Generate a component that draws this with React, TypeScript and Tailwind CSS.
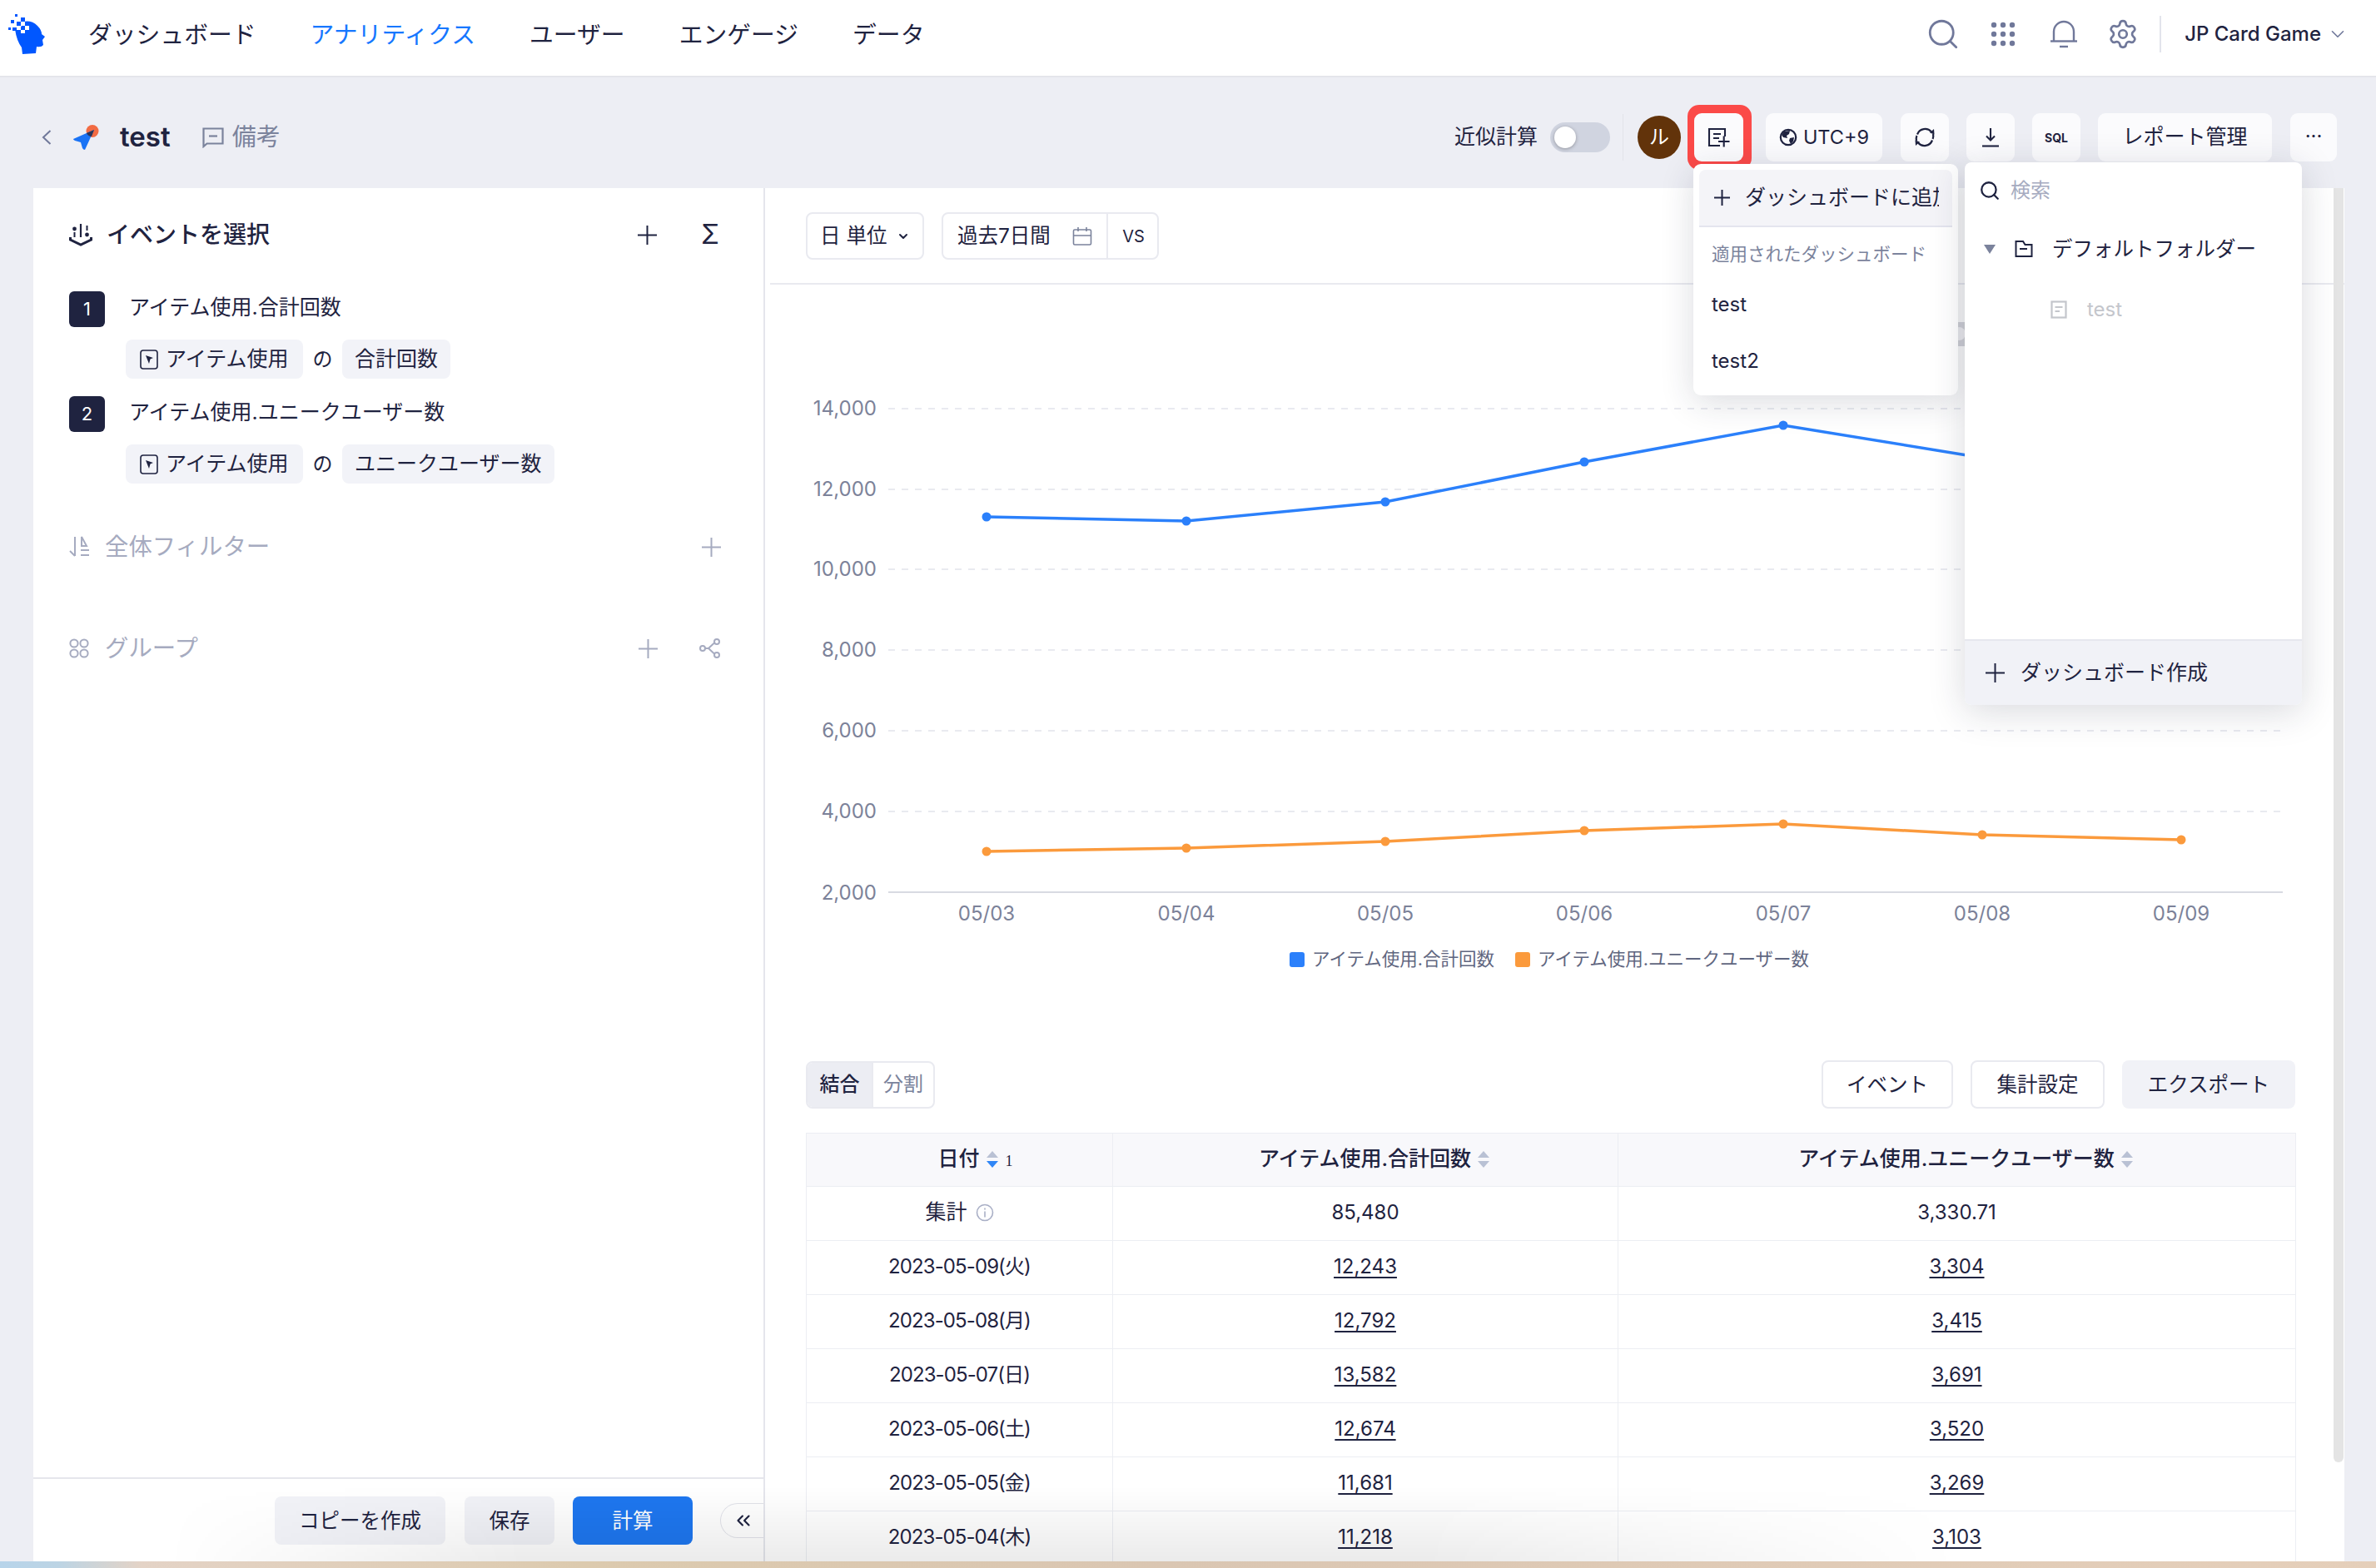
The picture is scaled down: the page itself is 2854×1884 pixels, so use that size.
import React from "react";
import { Search, ChevronDown, ChevronsLeft, Settings } from "lucide-react";

const ink = "#1f2340";

function Cross({ size, color, width = 2 }: { size: number; color?: string; width?: number }) {
  const c = size / 2;
  return (
    <svg width={size} height={size} viewBox={"0 0 " + size + " " + size} fill="none" stroke={color || ink} strokeWidth={width} className="shrink-0">
      <path d={"M0 " + c + " H" + size + " M" + c + " 0 V" + size} />
    </svg>
  );
}

function Logo() {
  return (
    <svg width="60" height="70" viewBox="0 0 60 70" className="shrink-0 -mt-[23px]">
      <path fill="#0057ff" d="M28 27 Q38 25 45 32 Q50 37 50 42 L54 45 L51 49 L52 55 Q50 58 44 57 L43 65 L27 66 L26 58 Q20 50 18 36 L24 36 Z" />
      <rect x="18" y="18" width="3" height="3" fill="#0057ff" />
      <rect x="13" y="25" width="4" height="4" fill="#0057ff" />
      <rect x="25" y="22" width="5" height="5" fill="#0057ff" />
      <rect x="20" y="27" width="5" height="5" fill="#0057ff" />
      <rect x="10" y="34" width="3" height="3" fill="#0057ff" />
      <rect x="15" y="34" width="5" height="4" fill="#0057ff" />
      <rect x="25" y="27" width="5" height="5" fill="#fff" />
      <rect x="30" y="32" width="5" height="5" fill="#fff" />
      <rect x="25" y="37" width="5" height="4" fill="#fff" />
      <rect x="20" y="32" width="5" height="5" fill="#fff" />
    </svg>
  );
}

function Rocket() {
  return (
    <svg width="32" height="32" viewBox="0 0 32 32" className="shrink-0">
      <circle cx="24" cy="8.5" r="7.5" fill="#f26b43" />
      <path d="M1 18 L26 7 L15 31 Q13 31 12 29 L10 22 L3 20 Q1 19 1 18 Z" fill="#1a73f5" />
      <path d="M17 11 L26 7 L23 15 Q19 15 17 11 Z" fill="#2c3558" />
    </svg>
  );
}

function NoteIcon() {
  return (
    <svg width="26" height="25" viewBox="0 0 26 25" fill="none" stroke="#7b839c" strokeWidth="2.2" className="shrink-0">
      <path d="M1.5 23 V1.5 H24.5 V19.5 H5.5 Z" />
      <path d="M8 10.5 H18" />
    </svg>
  );
}

function EventIcon() {
  return (
    <svg width="28" height="28" viewBox="0 0 28 28" fill="none" className="shrink-0">
      <path d="M1.5 17 V20 L14 26 L26.5 20 V17" stroke={ink} strokeWidth="3" />
      <path d="M14 1 V17" stroke={ink} strokeWidth="2.2" />
      <circle cx="6.5" cy="7" r="2.4" fill={ink} />
      <circle cx="21.5" cy="14" r="2.4" fill={ink} />
      <path d="M6.5 11 V17" stroke={ink} strokeWidth="2" />
      <path d="M21.5 3 V9" stroke={ink} strokeWidth="2" />
    </svg>
  );
}

function ChipIcon() {
  return (
    <svg width="22" height="24" viewBox="0 0 22 24" fill="none" className="shrink-0">
      <rect x="1" y="1" width="20" height="22" rx="3" stroke={ink} strokeWidth="1.6" />
      <path d="M7 7 L16 10 L12.5 11.5 L11 17 Z" fill={ink} />
    </svg>
  );
}

function Chip({ wide, children }: { wide?: boolean; children: React.ReactNode }) {
  return (
    <div className={"h-[47px] rounded-[8px] bg-[#f2f3f8] flex items-center text-[25px] text-[#1f2340] " + (wide ? "pl-[17px] w-[213px] gap-[9px]" : "px-[15px]")}>
      {children}
    </div>
  );
}

function Step({ n, title, metric }: { n: string; title: string; metric: string }) {
  return (
    <>
      <div className="flex items-center h-[43px]">
        <div className="w-[43px] h-[43px] rounded-[6px] bg-[#1f2340] text-white text-[22px] flex items-center justify-center">{n}</div>
        <div className="ml-[29px] text-[25px] text-[#1f2340] -mt-[3px]">{title}</div>
      </div>
      <div className="flex items-center h-[47px] mt-[15px] pl-[68px]">
        <Chip wide>
          <ChipIcon />
          アイテム使用
        </Chip>
        <div className="w-[47px] text-center text-[24px] text-[#1f2340]">の</div>
        <Chip>{metric}</Chip>
      </div>
    </>
  );
}

function FilterIcon() {
  return (
    <svg width="25" height="26" viewBox="0 0 25 26" fill="none" stroke="#a6abc0" strokeWidth="2" className="shrink-0">
      <path d="M7 1 V24 M1 18 L7 24" />
      <path d="M15 1 V12 L21 12 Z M14 17 H24 M14 23 H24" />
    </svg>
  );
}

function GroupIcon() {
  return (
    <svg width="24" height="24" viewBox="0 0 24 24" fill="none" stroke="#a6abc0" strokeWidth="2" className="shrink-0">
      <circle cx="6" cy="6" r="4.6" />
      <circle cx="18" cy="6" r="4.6" />
      <circle cx="6" cy="18" r="4.6" />
      <circle cx="18" cy="18" r="4.6" />
    </svg>
  );
}

function ShareIcon() {
  return (
    <svg width="26" height="24" viewBox="0 0 26 24" fill="none" stroke="#a6abc0" strokeWidth="2" className="shrink-0">
      <circle cx="4" cy="12" r="3" />
      <circle cx="21" cy="4" r="3" />
      <circle cx="21" cy="20" r="3" />
      <path d="M7 12 H11 L18 5.5 M11 12 L18 18.5" />
    </svg>
  );
}

function ToolButton({ className, children }: { className: string; children: React.ReactNode }) {
  return <div className={"h-[58px] rounded-[9px] bg-[#fbfbfd] flex items-center justify-center text-[#1f2340] " + className}>{children}</div>;
}

function AddDocIcon() {
  return (
    <svg width="28" height="24" viewBox="0 0 28 24" fill="none" stroke={ink} strokeWidth="2.1">
      <path d="M15 22 H2 V2 H21 V11" />
      <path d="M7 8 H16 M7 13 H14" />
      <path d="M13 17 H26.5 M19.7 10.5 V23.5" />
    </svg>
  );
}

function GlobeIcon() {
  return (
    <svg width="22" height="22" viewBox="0 0 22 22" fill="none">
      <circle cx="11" cy="11" r="9.2" stroke={ink} strokeWidth="2.2" />
      <path d="M6 4 L13 3 L12 7 L9 9 L10 12 L5 11 L3 8 Z M13 12 L18 11 L17 16 L14 19 L12 15 Z" fill={ink} />
    </svg>
  );
}

function RefreshIcon() {
  return (
    <svg width="26" height="26" viewBox="0 0 26 26" fill="none" stroke={ink} strokeWidth="2.2">
      <path d="M4 9.5 A10 10 0 0 1 21 6.5" />
      <path d="M22 16.5 A10 10 0 0 1 5 19.5" />
      <path d="M3 17 A10 10 0 0 1 3.4 11" />
      <path d="M23 9 A10 10 0 0 1 22.6 15" />
      <path d="M19 7.5 L24 3 L24.5 9.5 Z M7 18.5 L2 23 L1.5 16.5 Z" fill={ink} stroke="none" />
    </svg>
  );
}

function DownloadIcon() {
  return (
    <svg width="22" height="24" viewBox="0 0 22 24" fill="none" stroke={ink} strokeWidth="2.1">
      <path d="M11 1 V15 M6 10.5 L11 15.5 L16 10.5" />
      <path d="M1 22.5 H21" />
    </svg>
  );
}

function CalendarIcon() {
  return (
    <svg width="24" height="22" viewBox="0 0 24 22" fill="none" stroke="#7b839c" strokeWidth="1.6">
      <rect x="1.5" y="3" width="21" height="18" rx="1.5" />
      <path d="M1.5 10 H22.5 M7 0 V5 M17 0 V5" />
    </svg>
  );
}

function Sort({ active }: { active?: boolean }) {
  return (
    <svg width="16" height="22" viewBox="0 0 16 22" className="shrink-0 ml-[7px]">
      <path d="M8 1 L15 9 H1 Z" fill="#b9c1d4" />
      <path d="M8 21 L15 13 H1 Z" fill={active ? "#2f86f6" : "#b9c1d4"} />
    </svg>
  );
}

function InfoIcon() {
  return (
    <svg width="22" height="22" viewBox="0 0 22 22" fill="none" stroke="#a9afc6" strokeWidth="1.6" className="shrink-0">
      <circle cx="11" cy="11" r="9.5" />
      <path d="M11 9.5 V16.5" />
      <path d="M11 5.5 V7.5" />
    </svg>
  );
}

const labels = ["05/03", "05/04", "05/05", "05/06", "05/07", "05/08", "05/09"];
const xs = [1185, 1425, 1664, 1903, 2142, 2381, 2620];
const blue = [621, 626, 603, 555, 511, 550, 576];
const orange = [1023, 1019, 1011, 998, 990, 1003, 1009];
const grid: [string, number][] = [
  ["14,000", 491],
  ["12,000", 588],
  ["10,000", 684],
  ["8,000", 781],
  ["6,000", 878],
  ["4,000", 975],
];

function Chart() {
  const path = (v: number[]) => v.map((y, i) => xs[i] + "," + y).join(" ");
  return (
    <svg width="1884" height="932" viewBox="919 342 1884 932" className="block" fontFamily="Inter, 'Noto Sans CJK JP', sans-serif">
      {grid.map(([t, y]) => (
        <g key={t}>
          <line x1="1067" x2="2742" y1={y} y2={y} stroke="#e9eaf0" strokeWidth="2" strokeDasharray="8 8" />
          <text x="1053" y={y + 8} textAnchor="end" fontSize="24" fill="#7c8299">{t}</text>
        </g>
      ))}
      <line x1="1067" x2="2742" y1="1072" y2="1072" stroke="#d8dae2" strokeWidth="2" />
      <text x="1053" y="1081" textAnchor="end" fontSize="24" fill="#7c8299">2,000</text>
      {labels.map((l, i) => (
        <text key={l} x={xs[i]} y="1106" textAnchor="middle" fontSize="24" fill="#7c8299">{l}</text>
      ))}
      <rect x="2340" y="387" width="30" height="29" fill="#d6d7dc" />
      <circle cx="2353" cy="401" r="8" fill="#f4f4f6" />
      <polyline points={path(blue)} fill="none" stroke="#2b80fb" strokeWidth="3.5" />
      {blue.map((y, i) => <circle key={i} cx={xs[i]} cy={y} r="5.5" fill="#2b80fb" />)}
      <polyline points={path(orange)} fill="none" stroke="#fb9a3c" strokeWidth="3.5" />
      {orange.map((y, i) => <circle key={i} cx={xs[i]} cy={y} r="5.5" fill="#fb9a3c" />)}
      <rect x="1549" y="1144" width="18" height="18" rx="3" fill="#2b80fb" />
      <text x="1576" y="1160" fontSize="21.5" fill="#5f6680">アイテム使用.合計回数</text>
      <rect x="1820" y="1144" width="18" height="18" rx="3" fill="#fb9a3c" />
      <text x="1847" y="1160" fontSize="21.5" fill="#5f6680">アイテム使用.ユニークユーザー数</text>
    </svg>
  );
}

const rows = [
  ["2023-05-09(火)", "12,243", "3,304"],
  ["2023-05-08(月)", "12,792", "3,415"],
  ["2023-05-07(日)", "13,582", "3,691"],
  ["2023-05-06(土)", "12,674", "3,520"],
  ["2023-05-05(金)", "11,681", "3,269"],
  ["2023-05-04(木)", "11,218", "3,103"],
];

function DataTable() {
  const cell = "border border-[#eceef3] text-center text-[24px] text-[#1f2340] font-normal p-0 pb-[2px]";
  return (
    <table className="w-[1789px] table-fixed border-collapse mt-[29px]">
      <colgroup>
        <col className="w-[368px]" />
        <col className="w-[607px]" />
        <col className="w-[814px]" />
      </colgroup>
      <thead>
        <tr className="h-[64px] bg-[#f8f8fb]">
          <th className={cell}>
            <div className="flex items-center justify-center font-medium text-[25px] pl-[38px]">
              日付
              <Sort active />
              <span className="ml-[8px] text-[18px] font-normal font-['Liberation_Serif',serif] mt-[6px]">1</span>
            </div>
          </th>
          <th className={cell}>
            <div className="flex items-center justify-center font-medium text-[25px] pl-[22px]">
              アイテム使用.合計回数
              <Sort />
            </div>
          </th>
          <th className={cell}>
            <div className="flex items-center justify-center font-medium text-[25px] pl-[22px]">
              アイテム使用.ユニークユーザー数
              <Sort />
            </div>
          </th>
        </tr>
      </thead>
      <tbody>
        <tr className="h-[65px]">
          <td className={cell}>
            <div className="flex items-center justify-center gap-[10px] text-[25px]">
              集計
              <InfoIcon />
            </div>
          </td>
          <td className={cell}>85,480</td>
          <td className={cell}>3,330.71</td>
        </tr>
        {rows.map((r) => (
          <tr key={r[0]} className="h-[65px]">
            <td className={cell}><span className="tracking-[-0.9px]">{r[0]}</span></td>
            <td className={cell}><span className="underline underline-offset-[4px]">{r[1]}</span></td>
            <td className={cell}><span className="underline underline-offset-[4px]">{r[2]}</span></td>
          </tr>
        ))}
      </tbody>
    </table>
  );
}

function OutlineButton({ children, className }: { children: React.ReactNode; className: string }) {
  return <div className={"h-[58px] rounded-[8px] flex items-center justify-center text-[24.5px] " + className}>{children}</div>;
}

export default function App() {
  return (
    <div className="relative w-[2854px] h-[1884px] overflow-hidden flex flex-col bg-[#edeef4] text-[#1f2340] [font-family:Inter,'Noto_Sans_CJK_JP',sans-serif]">
      {/* top navigation */}
      <header className="h-[93px] shrink-0 bg-white border-b-2 border-[#e4e5eb] flex items-center">
        <Logo />
        <nav className="ml-[46px] flex items-center gap-[65px] text-[28.8px] -mt-[7px]">
          <span>ダッシュボード</span>
          <span className="text-[#1677ff]">アナリティクス</span>
          <span>ユーザー</span>
          <span>エンゲージ</span>
          <span>データ</span>
        </nav>
        <div className="ml-auto flex items-center pr-[33px] -mt-[10px]">
          <Search size={42} strokeWidth={1.6} color="#70789a" />
          <svg width="30" height="30" viewBox="0 0 30 30" fill="#70789a" className="ml-[36px]">
            {[4, 15, 26].map((y) => [4, 15, 26].map((x) => <circle key={x + "-" + y} cx={x} cy={y} r="3.2" />))}
          </svg>
          <svg width="34" height="34" viewBox="0 0 34 34" fill="none" stroke="#70789a" strokeWidth="2.4" className="ml-[41px]">
            <path d="M5 25 V14 A12 12 0 0 1 29 14 V25" />
            <path d="M1 25.5 H33" />
            <path d="M12 32 H22" />
          </svg>
          <Settings size={38} strokeWidth={1.7} color="#70789a" className="ml-[35px]" />
          <div className="w-[2px] h-[44px] bg-[#e2e4ec] ml-[25px]" />
          <span className="ml-[28px] text-[24px] font-medium">JP Card Game</span>
          <ChevronDown size={26} strokeWidth={1.5} color="#70789a" className="ml-[7px]" />
        </div>
      </header>

      {/* title row */}
      <div className="h-[133px] shrink-0 flex items-center pt-[11px] pl-[50px] pr-[47px]">
        <svg width="12" height="18" viewBox="0 0 12 18" fill="none" stroke="#70789a" strokeWidth="2" className="shrink-0">
          <path d="M10.5 1 L2 9 L10.5 17" />
        </svg>
        <div className="ml-[25px]"><Rocket /></div>
        <span className="ml-[25px] text-[33px] font-semibold">test</span>
        <div className="ml-[38px]"><NoteIcon /></div>
        <span className="ml-[10px] text-[29px] text-[#7b839c]">備考</span>
        <div className="ml-auto flex items-center">
          <span className="text-[25px]">近似計算</span>
          <div className="ml-[15px] w-[72px] h-[36px] rounded-full bg-[#d0d4e0] flex items-center pl-[5px]">
            <div className="w-[26px] h-[26px] rounded-full bg-white shadow-[0_1px_4px_rgba(0,0,0,0.3)]" />
          </div>
          <div className="ml-[15px] w-[1px] h-[56px] bg-[#e2e3ea]" />
          <div className="ml-[17px] w-[52px] h-[52px] rounded-full bg-[#62330a] text-white text-[24px] flex items-center justify-center">ル</div>
          <div className="ml-[8px] pl-[8px] pr-[10px] py-[10px] -my-[12px] rounded-[14px] bg-[#fb4a48]">
            <ToolButton className="w-[59px]"><AddDocIcon /></ToolButton>
          </div>
          <ToolButton className="ml-[17px] w-[140px] gap-[7px] text-[23.5px]"><GlobeIcon />UTC+9</ToolButton>
          <ToolButton className="ml-[22px] w-[58px]"><RefreshIcon /></ToolButton>
          <ToolButton className="ml-[21px] w-[58px]"><DownloadIcon /></ToolButton>
          <ToolButton className="ml-[21px] w-[58px] text-[14px] font-bold">SQL</ToolButton>
          <ToolButton className="ml-[21px] w-[209px] text-[25px]">レポート管理</ToolButton>
          <ToolButton className="ml-[22px] w-[56px] text-[24px] pb-[2px]">···</ToolButton>
        </div>
      </div>

      {/* main */}
      <main className="flex-1 min-h-0 flex pl-[40px] pr-[38px]">
        <section className="w-[879px] shrink-0 bg-white border-r-2 border-[#e5e6ec] flex flex-col">
          <div className="flex-1 pt-[36px] pl-[43px] pr-[51px]">
            <div className="h-[40px] flex items-center">
              <EventIcon />
              <span className="ml-[17px] text-[28px] font-medium">イベントを選択</span>
              <span className="ml-auto"><Cross size={23} /></span>
              <span className="ml-[53px] mr-[2px] text-[32px] leading-none">Σ</span>
            </div>
            <div className="mt-[48px]">
              <Step n="1" title="アイテム使用.合計回数" metric="合計回数" />
            </div>
            <div className="mt-[21px]">
              <Step n="2" title="アイテム使用.ユニークユーザー数" metric="ユニークユーザー数" />
            </div>
            <div className="mt-[56px] h-[40px] flex items-center text-[#a6abc0] text-[28.4px]">
              <FilterIcon />
              <span className="ml-[18px]">全体フィルター</span>
              <span className="ml-auto"><Cross size={23} color="#a6abc0" /></span>
            </div>
            <div className="mt-[82px] h-[40px] flex items-center text-[#a6abc0] text-[28.4px]">
              <GroupIcon />
              <span className="ml-[19px]">グループ</span>
              <span className="ml-auto"><Cross size={23} color="#a6abc0" /></span>
              <span className="ml-[50px]"><ShareIcon /></span>
            </div>
          </div>
          <div className="h-[101px] shrink-0 border-t-2 border-[#e5e6ec] flex items-start justify-end pt-[21px]">
            <OutlineButton className="w-[205px] bg-[#f1f2f7] h-[57px]">コピーを作成</OutlineButton>
            <OutlineButton className="ml-[23px] w-[108px] bg-[#f1f2f7] h-[57px]">保存</OutlineButton>
            <OutlineButton className="ml-[22px] w-[144px] bg-[#1e77f0] text-white h-[57px]">計算</OutlineButton>
            <div className="ml-[33px] mt-[8px] w-[52px] h-[42px] rounded-l-full border border-r-0 border-[#e2e3ea] flex items-center justify-center pl-[2px]">
              <ChevronsLeft size={26} strokeWidth={2} />
            </div>
          </div>
        </section>

        <section className="relative flex-1 min-w-0 bg-white overflow-hidden">
          <div className="h-[116px] ml-[6px] border-b-2 border-[#e9eaf0] pl-[43px] pt-[29px] flex items-start text-[24.5px]">
            <div className="h-[57px] w-[142px] rounded-[8px] border-2 border-[#e9eaf0] flex items-center pl-[15px]">
              日 単位
              <ChevronDown size={16} strokeWidth={3} className="ml-[12px]" />
            </div>
            <div className="ml-[21px] h-[57px] w-[261px] rounded-[8px] border-2 border-[#e9eaf0] flex items-center">
              <div className="w-[198px] flex items-center pl-[17px] border-r-2 border-[#e9eaf0] h-full">
                過去7日間
                <span className="ml-[26px]"><CalendarIcon /></span>
              </div>
              <div className="flex-1 text-center text-[20px] pl-[2px]">VS</div>
            </div>
          </div>
          <Chart />
          <div className="pl-[49px]">
            <div className="flex items-center w-[1789px]">
              <div className="h-[57px] w-[155px] rounded-[8px] border-2 border-[#e9eaf0] flex overflow-hidden">
                <div className="w-[77px] bg-[#ecedf3] font-medium text-[24px] flex items-center justify-center">結合</div>
                <div className="flex-1 border-l-2 border-[#e9eaf0] text-[#7b839c] text-[24px] flex items-center justify-center">分割</div>
              </div>
              <OutlineButton className="ml-auto w-[158px] border-2 border-[#e9eaf0]">イベント</OutlineButton>
              <OutlineButton className="ml-[21px] w-[161px] border-2 border-[#e9eaf0]">集計設定</OutlineButton>
              <OutlineButton className="ml-[21px] w-[208px] bg-[#f1f2f7]">エクスポート</OutlineButton>
            </div>
            <DataTable />
          </div>
          <div className="absolute top-0 right-[1px] w-[12px] h-[1531px] rounded-b-full bg-[#e4e4e4]" />
        </section>
      </main>

      {/* desktop wallpaper strip */}
      <div className="h-[8px] shrink-0 bg-[linear-gradient(to_right,#b7d4ea_0px,#bcd4e4_70px,#e4d3c6_170px,#dccaae_700px,#dac6b2_1400px,#e5cfba_2854px)]" />

      {/* dock shadow */}
      <div className="absolute left-[200px] right-[500px] bottom-[8px] h-[90px] pointer-events-none bg-[linear-gradient(to_top,rgba(0,0,0,0.08),rgba(0,0,0,0))] [mask-image:linear-gradient(to_right,transparent,black_20%,black_70%,transparent)]" />

      {/* add-to-dashboard popover */}
      <div className="absolute left-[2034px] top-[197px] w-[318px] h-[278px] bg-white rounded-[9px] shadow-[0_8px_40px_rgba(30,35,60,0.16)] p-[7px] overflow-hidden">
        <div className="h-[69px] rounded-t-[8px] bg-[#f4f4f8] border-b-2 border-[#e4e5ee] flex items-center pl-[18px]">
          <Cross size={19} />
          <span className="ml-[18px] w-[233px] overflow-hidden whitespace-nowrap text-[25px]">ダッシュボードに追加</span>
        </div>
        <div className="mt-[17px] pl-[15px] text-[21.5px] text-[#7b839c] leading-[30px]">適用されたダッシュボード</div>
        <div className="mt-[28px] pl-[15px] text-[24px] leading-[36px]">test</div>
        <div className="mt-[32px] pl-[15px] text-[24px] leading-[36px]">test2</div>
      </div>

      {/* folder popover */}
      <div className="absolute left-[2360px] top-[195px] w-[405px] h-[652px] bg-white rounded-[8px] shadow-[0_8px_44px_rgba(30,35,60,0.17)] flex flex-col overflow-hidden">
        <div className="flex-1">
          <div className="mt-[16px] pl-[17px] h-[36px] flex items-center text-[24px] text-[#a6abc0]">
            <Search size={26} strokeWidth={2.1} color={ink} />
            <span className="ml-[12px]">検索</span>
          </div>
          <div className="mt-[32px] h-[40px] flex items-center pl-[23px] text-[24.5px] text-[#1f2340]">
            <svg width="14" height="11" viewBox="0 0 14 11" fill="#7b839c" className="shrink-0"><path d="M0 0 H14 L7 11 Z" /></svg>
            <svg width="22" height="22" viewBox="0 0 22 22" fill="none" stroke={ink} strokeWidth="2" className="ml-[23px] shrink-0">
              <path d="M1.5 20 V2 H10 L12.5 6 H20.5 V20 Z" />
              <path d="M6 11 H15" />
            </svg>
            <span className="ml-[23px]">デフォルトフォルダー</span>
          </div>
          <div className="mt-[35px] h-[36px] flex items-center pl-[103px] text-[24px] text-[#c4c6cc]">
            <svg width="20" height="22" viewBox="0 0 20 22" fill="none" stroke="#c4c6cc" strokeWidth="2.2" className="shrink-0">
              <rect x="1.5" y="1.5" width="17" height="19" />
              <path d="M5.5 8 H14.5 M5.5 13 H11" />
            </svg>
            <span className="ml-[24px]">test</span>
          </div>
        </div>
        <div className="h-[79px] shrink-0 bg-[#f1f2f7] border-t-2 border-[#e6e7ee] flex items-center pl-[25px] text-[25px]">
          <Cross size={23} />
          <span className="ml-[19px]">ダッシュボード作成</span>
        </div>
      </div>
    </div>
  );
}
